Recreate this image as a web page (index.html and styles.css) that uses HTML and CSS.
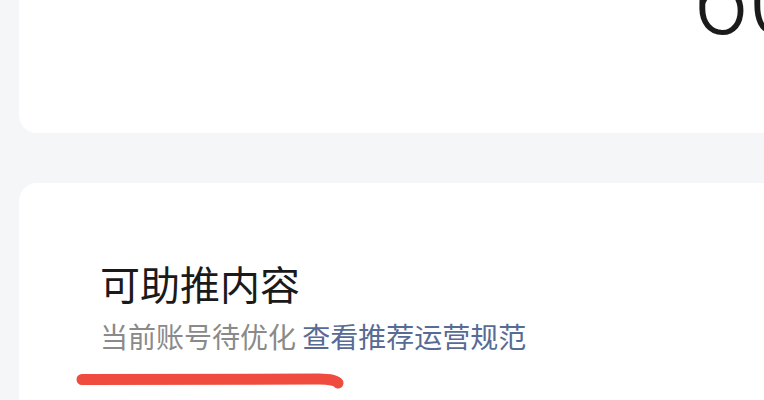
FILE: index.html
```html
<!DOCTYPE html>
<html lang="zh">
<head>
<meta charset="utf-8">
<link rel="stylesheet" href="styles.css">
</head>
<body>
<div class="page">
  <section class="card card-top">
    <div class="big-number">60</div>
  </section>
  <section class="card card-main">
    <h2 class="title">可助推内容</h2>
    <p class="subtitle"><span class="muted">当前账号待优化</span> <a class="link">查看推荐运营规范</a></p>
    <svg class="mark" width="360" height="30" viewBox="0 0 360 30">
      <path d="M63 14.5 L300 14 Q316 14 319 18" fill="none" stroke="#ef4c3f" stroke-width="11" stroke-linecap="round" stroke-linejoin="round"/>
    </svg>
  </section>
</div>
</body>
</html>
```
FILE: styles.css
```css
html, body {
  margin: 0;
  padding: 0;
  background: #f5f6f8;
  width: 764px;
  height: 400px;
  overflow: hidden;
  font-family: "Noto Sans CJK SC", "Noto Sans", sans-serif;
}
.page {
  display: flex;
  flex-direction: column;
  gap: 50px;
  padding-left: 19px;
}
.card {
  background: #fff;
  border-radius: 18px 0 0 18px;
  width: 800px;
  position: relative;
}
.card-top {
  height: 183px;
  margin-top: -50px;
  display: flex;
  justify-content: flex-start;
  padding-left: 674px;
  box-sizing: border-box;
}
.big-number {
  font-family: "Roboto", sans-serif;
  font-weight: 300;
  font-size: 100px;
  line-height: 1;
  color: #1b1b1b;
  white-space: nowrap;
}
.card-main {
  height: 300px;
  padding: 80px 0 0 81px;
  box-sizing: border-box;
}
.title {
  margin: 0;
  font-size: 40px;
  font-weight: 400;
  line-height: 40px;
  color: #1a1a1a;
}
.subtitle {
  margin: 19px 0 0;
  font-size: 28px;
  line-height: 28px;
}
.muted { color: #8a8a8a; }
.link { color: #576b95; }
.mark {
  position: absolute;
  left: 0;
  top: 182px;
}
```
